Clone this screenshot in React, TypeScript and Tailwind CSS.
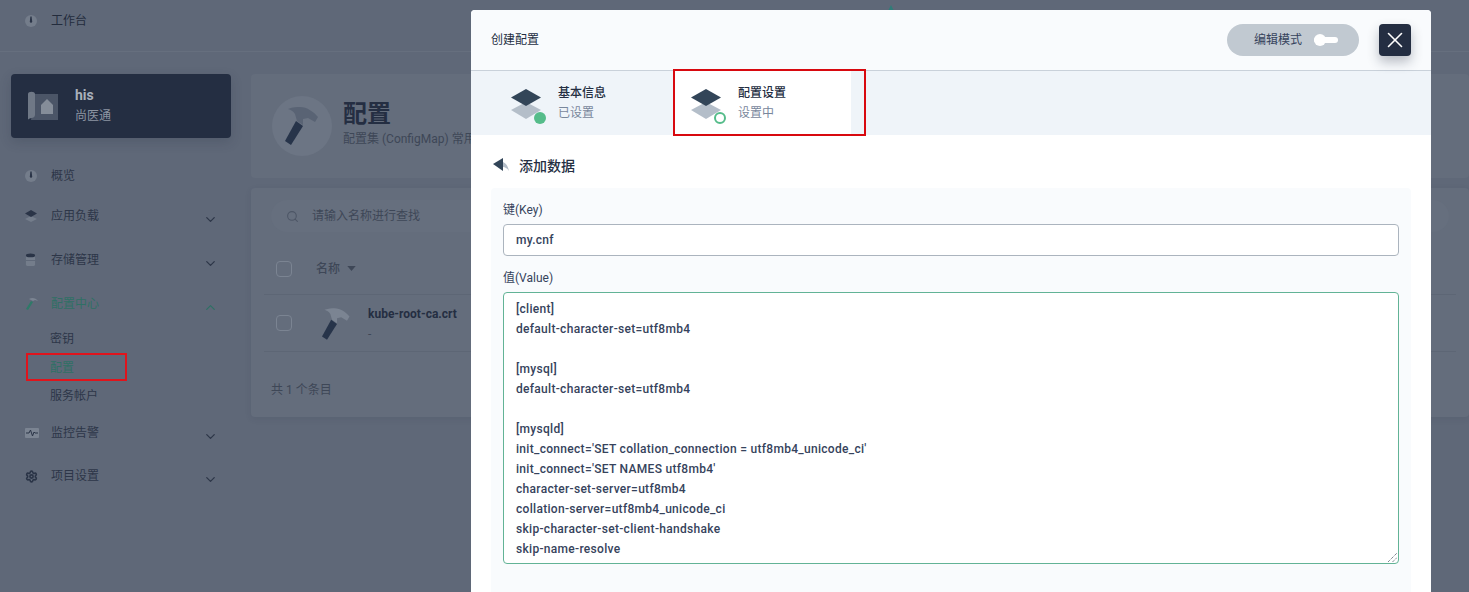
import { ChevronDown, ChevronUp, Search, Settings, X } from "lucide-react";

const cjk = "font-['Roboto','Liberation_Sans','Noto_Sans_CJK_SC',sans-serif]";

function Hammer({ className, head }: { className: string; head: string }) {
  return (
    <svg viewBox="0 0 36 40" className={className}>
      <path d="M3 3 C8 1 12 1 15 1 C22 1 29 6 33 11 L30 16 L23 12 L18 13 L18 19 L12 15 L10 8 C8 5 6 4 3 3 Z" fill={head} />
      <path d="M11 15 L18 20 L6 39 L0 35 Z" fill="#27344a" />
    </svg>
  );
}

function Diamonds({ filled }: { filled: boolean }) {
  return (
    <div className="relative mt-[1px] h-[30px] w-[36px] shrink-0">
      <svg viewBox="0 0 30 30" className="h-[30px] w-[30px]">
        <path d="M15 13 L30 21 L15 30 L0 21 Z" fill="#b4bec9" />
        <path d="M15 0 L30 8.5 L15 17 L0 8.5 Z" fill="#324558" />
      </svg>
      {filled ? (
        <div className="absolute left-[23px] top-[23px] h-[12px] w-[12px] rounded-full bg-[#55bc8a]" />
      ) : (
        <div className="absolute left-[23px] top-[23px] h-[12px] w-[12px] rounded-full border-2 border-[#55bc8a] bg-white" />
      )}
    </div>
  );
}

function NavItem({ label, icon, open, active }: { label: string; icon: React.ReactNode; open?: boolean; active?: boolean }) {
  return (
    <div className={`flex h-[44px] items-center pl-[25px] pr-[13px] text-[12px] ${active ? "text-[#2f7065]" : "text-[#2d3648]"}`}>
      <div className="flex w-[26px] shrink-0 items-center">{icon}</div>
      <span className="flex-1">{label}</span>
      {open === undefined ? null : open ? (
        <ChevronUp size={15} strokeWidth={2} className="translate-y-[3px]" />
      ) : (
        <ChevronDown size={15} strokeWidth={2} className="translate-y-[3px]" />
      )}
    </div>
  );
}

function Dial() {
  return (
    <svg viewBox="0 0 12 12" className="h-[12px] w-[12px]">
      <circle cx="6" cy="6" r="6" fill="#747d8b" />
      <path d="M5.4 1.5 H6.6 L7.2 6.5 A1.2 1.2 0 1 1 4.8 6.5 Z" fill="#2a3447" />
    </svg>
  );
}

const configLines = [
  "[client]",
  "default-character-set=utf8mb4",
  "",
  "[mysql]",
  "default-character-set=utf8mb4",
  "",
  "[mysqld]",
  "init_connect='SET collation_connection = utf8mb4_unicode_ci'",
  "init_connect='SET NAMES utf8mb4'",
  "character-set-server=utf8mb4",
  "collation-server=utf8mb4_unicode_ci",
  "skip-character-set-client-handshake",
  "skip-name-resolve",
];

export default function App() {
  return (
    <div className={`relative h-[592px] w-[1469px] overflow-hidden bg-[#5f6878] ${cjk}`}>
      {/* page behind the modal */}
      <div className="h-[52px] border-b border-[#666f7e]">
        <div className="flex h-[41px] items-center pl-[25px] text-[12px] text-[#232c3d]">
          <div className="flex w-[26px] items-center"><Dial /></div>
          工作台
        </div>
      </div>
      <div className="flex">
        <div className="w-[251px] shrink-0 pl-[11px] pt-[22px]">
          <div className="flex h-[64px] w-[220px] items-center rounded bg-[#242e42] pl-[17px] shadow-[0_4px_12px_rgba(36,46,66,0.2)]">
            <svg viewBox="0 0 30 30" className="h-[30px] w-[30px]">
              <path d="M7 3 H30 V29 H3 Z" fill="#4b5567" />
              <path d="M0 3 C0 0 7 0 7 3 V24 C7 26 5 27 3.5 27 C2 27 0 28 0 29 Z" fill="#6f7886" />
              <path d="M13 14 L19 8 L25 14 V23 H13 Z" fill="#858d99" />
            </svg>
            <div className="-mt-[2px] ml-[17px]">
              <div className="text-[14px] font-bold leading-[20px] text-[#a9b0bb]">his</div>
              <div className="mt-[1px] text-[12px] leading-[20px] text-[#8d95a2]">尚医通</div>
            </div>
          </div>
          <div className="-ml-[11px] mt-[16px] w-[231px]">
            <NavItem label="概览" icon={<Dial />} />
            <div className="-mt-[4px]">
              <NavItem
                label="应用负载"
                open={false}
                icon={
                  <svg viewBox="0 0 12 12" className="h-[12px] w-[12px]">
                    <path d="M6 6 L12 9 L6 12 L0 9 Z" fill="#747d8b" />
                    <path d="M6 0 L12 3.5 L6 7 L0 3.5 Z" fill="#2a3447" />
                  </svg>
                }
              />
            </div>
            <NavItem
              label="存储管理"
              open={false}
              icon={
                <svg viewBox="0 0 12 14" className="h-[14px] w-[11px]">
                  <rect x="1" y="3" width="10" height="10.5" rx="1.5" fill="#747d8b" />
                  <ellipse cx="6" cy="2" rx="5" ry="2" fill="#2a3447" />
                  <rect x="1" y="7" width="10" height="1" fill="#5f6878" />
                </svg>
              }
            />
            <NavItem
              label="配置中心"
              open
              active
              icon={
                <svg viewBox="0 0 14 14" className="h-[14px] w-[14px]">
                  <path d="M4 2 C7 0 11 1 13 4 L10 3 L8 4 Z" fill="#7b8492" />
                  <path d="M6 4 L8 5 L3 13 L1 12 Z" fill="#2e7a68" />
                </svg>
              }
            />
            <div className="-mt-[1px] pl-[50px] text-[12px] leading-[28px] text-[#2d3648]">
              <div>密钥</div>
              <div className="mt-[1px] text-[#2f7065]">配置</div>
              <div>服务帐户</div>
            </div>
            <div className="mt-[1px]">
              <NavItem
                label="监控告警"
                open={false}
                icon={
                  <svg viewBox="0 0 14 10" className="h-[10px] w-[14px]">
                    <rect width="14" height="10" rx="1" fill="#7b8492" />
                    <path d="M1 5 H4 L5.5 2 L7.5 8 L9 4 L10 5 H13" fill="none" stroke="#2a3447" strokeWidth="1" />
                  </svg>
                }
              />
              <div className="-mt-[1px]">
                <NavItem label="项目设置" open={false} icon={<Settings size={13} strokeWidth={3} className="text-[#2a3447]" />} />
              </div>
            </div>
          </div>
        </div>
        <div className="min-w-0 flex-1 pt-[22px]">
          <div className="flex h-[104px] items-center rounded bg-[#646d7c] pl-[21px] pr-[40px]">
            <div className="flex h-[60px] w-[60px] shrink-0 items-start rounded-full bg-[#6c7584] pl-[13px] pt-[10px]">
              <Hammer head="#596374" className="h-[40px] w-[36px]" />
            </div>
            <div className="-mt-[4px] ml-[11px]">
              <div className="text-[24px] font-bold leading-[30px] text-[#242e42]">配置</div>
              <div className="text-[12px] leading-[20px] text-[#3e4757]">配置集 (ConfigMap) 常用于存储工作负载所需的配置信息</div>
            </div>
          </div>
          <div className="mt-[10px] rounded bg-[#646d7c] shadow-[0_2px_6px_rgba(36,46,66,0.1)]">
            <div className="flex h-[55px] items-center px-[20px] pt-[1px]">
              <div className="flex h-[32px] w-full items-center rounded-full bg-[#666f7e] pl-[15px] text-[12px] text-[#3e4757]">
                <Search size={13} className="mr-[13px] text-[#4d5666]" />
                请输入名称进行查找
              </div>
            </div>
            <div className="mx-[13px] flex h-[52px] items-center border-b border-[#5d6675] pl-[12px] text-[12px] font-medium text-[#3e4757]">
              <div className="mr-[24px] h-[16px] w-[16px] rounded-sm border border-[#7b8492]" />
              名称
              <svg viewBox="0 0 10 6" className="ml-[7px] h-[5px] w-[9px]"><path d="M0 0 H10 L5 6 Z" fill="#3e4757" /></svg>
            </div>
            <div className="mx-[13px] flex h-[57px] items-center border-b border-[#5d6675] pl-[12px]">
              <div className="mr-[30px] h-[16px] w-[16px] rounded-sm border border-[#7b8492]" />
              <Hammer head="#7b8492" className="mt-[2px] h-[34px] w-[30px]" />
              <div className="ml-[16px] mt-[1px]">
                <div className="text-[12px] font-bold leading-[18px] text-[#242e42]">kube-root-ca.crt</div>
                <div className="mt-[2px] text-[12px] leading-[18px] text-[#3e4757]">-</div>
              </div>
            </div>
            <div className="flex h-[65px] items-center pl-[20px] pt-[11px] text-[12px] text-[#3e4757]">共 1 个条目</div>
          </div>
        </div>
      </div>

      {/* logo peeking out above the modal */}
      <svg viewBox="0 0 10 10" className="absolute left-[886px] top-[5px] h-[10px] w-[10px]">
        <path d="M5 0 L10 10 H0 Z" fill="#2f7c78" />
      </svg>

      {/* highlight round the sidebar entry */}
      <div className="absolute left-[26px] top-[353px] h-[28px] w-[101px] border-2 border-[#e0141c]" />

      {/* modal */}
      <div className="absolute left-[471px] top-[10px] h-[600px] w-[960px] overflow-hidden rounded-t bg-white text-[#242e42]">
        <div className="flex h-[61px] items-center border-b border-[#c9d1da] bg-[#f9fbfd] pl-[20px] pr-[20px] text-[12px]">
          <span className="flex-1">创建配置</span>
          <div className="flex h-[32px] w-[132px] items-center rounded-full bg-[#c1c9d1] pl-[27px] text-[#36435c]">
            编辑模式
            <div className="relative ml-[12px] h-[6px] w-[24px] rounded-full bg-white">
              <div className="absolute -top-[3px] left-0 h-[12px] w-[12px] rounded-full bg-white" />
            </div>
          </div>
          <div className="ml-[20px] flex h-[32px] w-[32px] items-center justify-center rounded bg-[#242e42] text-white shadow-[0_6px_12px_rgba(36,46,66,0.3)]">
            <X size={26} strokeWidth={1.5} />
          </div>
        </div>
        <div className="flex h-[64px] bg-[#eff4f9]">
          <div className="flex w-[203px] items-center pl-[40px]">
            <Diamonds filled />
            <div className="ml-[11px] text-[12px] leading-[20px]">
              <div className="font-medium">基本信息</div>
              <div className="text-[#79879c]">已设置</div>
            </div>
          </div>
          <div className="flex w-[177px] items-center bg-white pl-[17px]">
            <Diamonds filled={false} />
            <div className="ml-[11px] text-[12px] leading-[20px]">
              <div className="font-medium">配置设置</div>
              <div className="text-[#79879c]">设置中</div>
            </div>
          </div>
        </div>
        <div className="px-[20px]">
          <div className="flex h-[53px] items-center pt-[9px] text-[14px] font-medium">
            <svg viewBox="0 0 16 14" className="-mt-[3px] ml-[2px] mr-[10px] h-[14px] w-[16px]">
              <path d="M0 6 L10 0 V13 Z" fill="#324558" />
              <path d="M10 4 C13 5 15 8 16 13 C14 10 12 9 10 9 Z" fill="#b4bec9" />
            </svg>
            添加数据
          </div>
          <div className="h-[420px] rounded bg-[#f9fbfd] px-[12px] pt-[13px] text-[12px]">
            <div className="leading-[18px] text-[#36435c]">键(Key)</div>
            <div className="mt-[5px] flex h-[32px] items-center rounded border border-[#abb4be] bg-white pl-[12px] font-medium tracking-[0.3px] text-[#36435c]">my.cnf</div>
            <div className="mt-[13px] leading-[18px] text-[#36435c]">值(Value)</div>
            <div className="relative mt-[5px] h-[272px] overflow-hidden rounded border border-[#62b396] bg-white pl-[12px] pt-[6px] font-medium leading-[20px] tracking-[0.3px] text-[#36435c]">
              {configLines.map((line, i) => (
                <div key={i} className="h-[20px]">{line}</div>
              ))}
              <svg viewBox="0 0 9 9" className="absolute bottom-[1px] right-[1px] h-[9px] w-[9px]">
                <path d="M0 9 L9 0 M4.5 9 L9 4.5" stroke="#4a5464" strokeWidth="1" strokeDasharray="1 1" />
              </svg>
            </div>
          </div>
        </div>
      </div>
      <div className="absolute left-[673px] top-[69px] h-[67px] w-[193px] border-2 border-[#d8090f]" />
    </div>
  );
}
